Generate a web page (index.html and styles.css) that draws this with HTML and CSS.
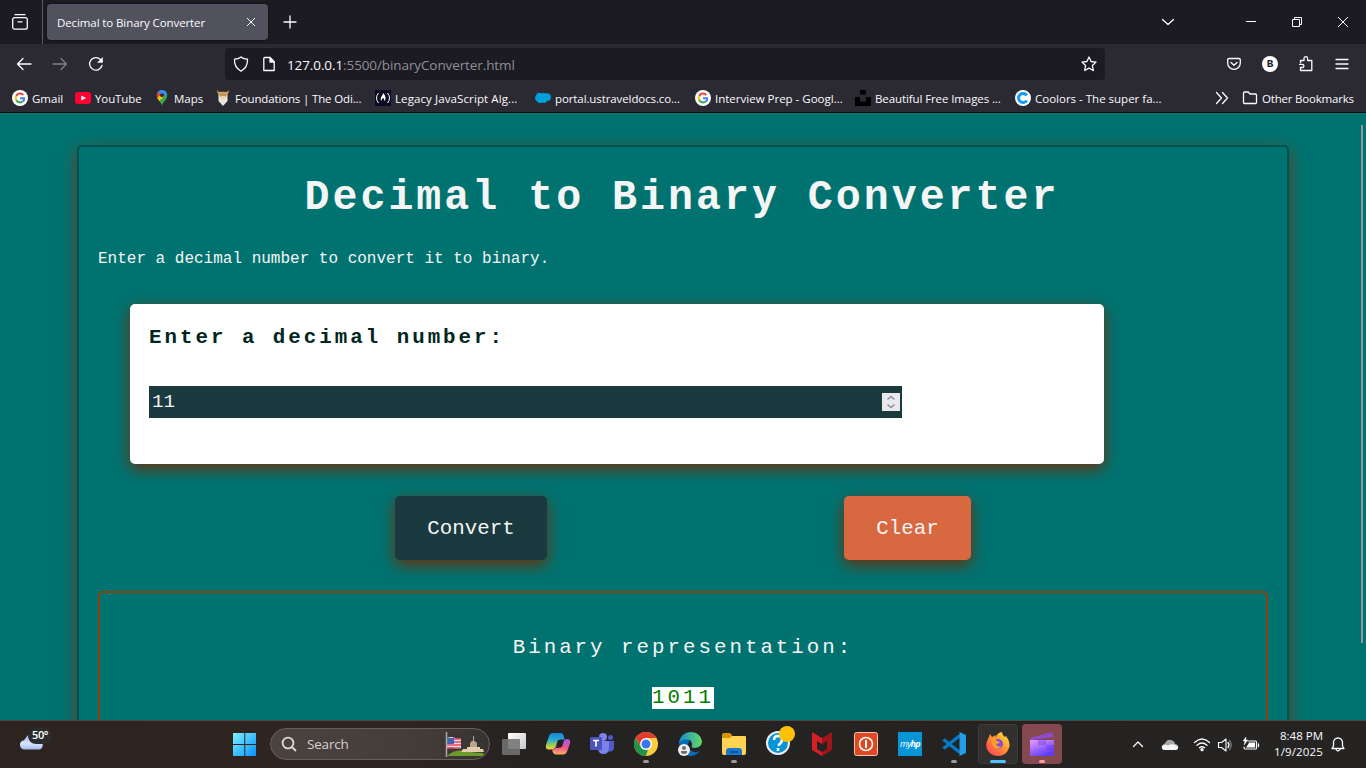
FILE: index.html
```html
<!DOCTYPE html>
<html lang="en">
<head>
<meta charset="utf-8">
<title>Decimal to Binary Converter</title>
<link rel="stylesheet" href="styles.css">
</head>
<body>
<header class="browser">
  <div class="tabbar">
    <div class="recent"><svg width="20" height="20" viewBox="0 0 20 20" class="line"><path d="M5 2.700h10"/><rect x="2.700" y="5.600" width="14.600" height="11.600" rx="2"/><path d="M8 9.800h4"/></svg></div>
    <div class="tab"><span>Decimal to Binary Converter</span><svg width="10" height="10" class="thin"><path d="M1 1l8 8M9 1l-8 8"/></svg></div>
    <svg class="plus line" width="14" height="14"><path d="M7 1v12M1 7h12"/></svg>
    <div class="window">
      <svg width="14" height="14" class="line"><path d="M1.500 4.500L7 9.500l5.500-5"/></svg>
      <svg width="12" height="12" class="thin"><path d="M1 5.500h10"/></svg>
      <svg width="12" height="12" class="thin"><path d="M1.500 3.500h7v7h-7zM3.500 3.500v-2h7v7h-2"/></svg>
      <svg width="12" height="12" class="thin"><path d="M1 1l10 10M11 1L1 11"/></svg>
    </div>
  </div>
  <div class="navbar">
    <svg width="16" height="16" class="line"><path d="M15 8H1.500M7 2.500L1.500 8 7 13.500"/></svg>
    <svg width="16" height="16" class="line dim"><path d="M1 8h13.500M9 2.500L14.500 8 9 13.500"/></svg>
    <svg width="16" height="16" class="line"><path d="M14 9.500A6.300 6.300 0 1 1 12.500 3.500"/><path d="M14.800 1v5.800H9z" fill="#fbfbfe" stroke="none"/></svg>
    <div class="address">
      <svg width="16" height="16" class="line"><path d="M8 .9C6 2.500 4 3 1.500 3.200 1.200 8.500 2.500 12 8 15.200 13.500 12 14.800 8.500 14.500 3.200 12 3 10 2.500 8 .9z"/></svg>
      <svg width="16" height="16" class="line"><path d="M3.800 1.500H9L13.200 6v8.500h-10.400V2.500q0-1 1-1z"/><path d="M9 1.500V6h4.200z" fill="#fbfbfe"/></svg>
      <span class="url"><b>127.0.0.1</b>:5500/binaryConverter.html</span>
      <svg width="16" height="16" class="line star"><path d="M8 1l2.100 4.500 4.900.6-3.600 3.400.9 5L8 12.100l-4.300 2.400.9-5L1 6.100l4.900-.6z"/></svg>
    </div>
    <div class="tools">
      <svg width="16" height="16" class="line"><path d="M3 2.500h10q1.300 0 1.300 1.300v3.200a6.300 6.300 0 0 1-12.600 0V3.800Q1.700 2.500 3 2.500zM5 6.500l3 2.800 3-2.800"/></svg>
      <span class="avatar">B</span>
      <svg width="16" height="16" class="line"><path d="M2.500 6.500V4.500H6V2.500a1.800 1.800 0 0 1 3.600 0v2h4.200v10H2.500V11.500h1.800a1.500 1.500 0 0 0 0-3.200H1.500"/></svg>
      <svg width="16" height="16" class="line"><path d="M2 3.500h12M2 8h12M2 12.500h12"/></svg>
    </div>
  </div>
  <nav class="bookmarks">
    <a class="bm w1"><svg width="16" height="16" viewBox="0 0 16 16"><circle cx="8" cy="8" r="8" fill="#fff"/><g fill="none" stroke-width="2"><path d="M11.300 5A4.300 4.300 0 0 0 4.200 6" stroke="#ea4335"/><path d="M4.200 6a4.300 4.300 0 0 0 0 4" stroke="#fbbc05"/><path d="M4.200 10a4.300 4.300 0 0 0 6.500 1.500" stroke="#34a853"/><path d="M10.700 11.500A4 4 0 0 0 12.200 8.200H8" stroke="#4285f4"/></g></svg><span>Gmail</span></a>
    <a class="bm w2"><svg width="16" height="16"><rect y="2" width="16" height="12" rx="3" fill="#ff0033"/><path d="M6.300 5.500v5L11 8z" fill="#fff"/></svg><span>YouTube</span></a>
    <a class="bm w3"><svg width="16" height="16"><path d="M8 16C7.500 12 2.700 9.500 2.700 5.300A5.300 5.300 0 0 1 13.300 5.300C13.300 9.500 8.500 12 8 16z" fill="#34a853"/><path d="M3.900 2A5.300 5.300 0 0 1 13 3.800L8 8z" fill="#4285f4"/><path d="M3.900 2L7 5 3.400 8Q2 5 3.900 2z" fill="#ea4335"/><path d="M3.300 8L8 3.500l2 3-4.800 4.500z" fill="#fbbc04"/><circle cx="8" cy="5.200" r="1.900" fill="#2b2a33"/></svg><span>Maps</span></a>
    <a class="bm w4"><svg width="16" height="16"><path d="M2 0Q2 4 5 4.500L11 4.500Q14 4 14 0L12 2Q8 1.500 4 2z" fill="#d3a15b"/><path d="M3.500 4q4.500-2.500 9 0v7l-4.500 5-4.500-5z" fill="#e8e5de"/><path d="M4 4q4-3 8 0l-1 3H5z" fill="#c69354"/><path d="M5.500 6h5v2l-2.500 1.500L5.500 8z" fill="#f2cfaa"/></svg><span>Foundations | The Odi...</span></a>
    <a class="bm w5"><svg width="16" height="16"><path d="M0 0h16v16H0z" fill="#0a0a23"/><path d="M3.500 3Q-.5 8 3.500 13M12.500 3q4 5 0 10" fill="none" stroke="#fff"/><path d="M8 3q3 3 2.500 5.500T9.500 11Q9 8 8 8T6.500 11Q5 9 6 7 8 5 8 3z" fill="#fff"/></svg><span>Legacy JavaScript Alg...</span></a>
    <a class="bm w6"><svg width="16" height="16"><path d="M2 11.500Q-1 9 .5 6.500T2 3.500Q4 2 6.500 3.500q2-1.500 4 0 5-1 5.500 3.500 0 4-4 4-1.500 3-4.500 1.500Q4 14.500 2 11.500z" fill="#009edb"/></svg><span>portal.ustraveldocs.co...</span></a>
    <a class="bm w7"><svg width="16" height="16" viewBox="0 0 16 16"><circle cx="8" cy="8" r="8" fill="#fff"/><g fill="none" stroke-width="2"><path d="M11.300 5A4.300 4.300 0 0 0 4.200 6" stroke="#ea4335"/><path d="M4.200 6a4.300 4.300 0 0 0 0 4" stroke="#fbbc05"/><path d="M4.200 10a4.300 4.300 0 0 0 6.500 1.500" stroke="#34a853"/><path d="M10.700 11.500A4 4 0 0 0 12.200 8.200H8" stroke="#4285f4"/></g></svg><span>Interview Prep - Googl...</span></a>
    <a class="bm w8"><svg width="16" height="16"><path d="M5 0h6v4.500H5zM0 7h5v4.500h6V7h5v9H0z"/></svg><span>Beautiful Free Images ...</span></a>
    <a class="bm w9"><svg width="16" height="16"><circle cx="8" cy="8" r="8" fill="#fff"/><path d="M11.800 5.500a4.500 4.500 0 1 0 0 5" fill="none" stroke="#149bff" stroke-width="3"/></svg><span>Coolors - The super fa...</span></a>
    <a class="bm other"><svg class="more line" width="14" height="16"><path d="M1.500 2.500L6.500 8l-5 5.500M7.500 2.500L12.500 8l-5 5.500"/></svg><svg width="16" height="16" class="line"><path d="M2.500 2h3.800l1.700 2h5.500q1 0 1 1v7.500q0 1-1 1h-11q-1 0-1-1V3q0-1 1-1z"/></svg><span>Other Bookmarks</span></a>
  </nav>
</header>
<div class="viewport">
  <main class="container">
    <h1>Decimal to Binary Converter</h1>
    <p class="intro">Enter a decimal number to convert it to binary.</p>
    <section class="card">
      <label>Enter a decimal number:</label>
      <div class="field"><span>11</span><svg class="spin" width="18" height="18"><path d="M5.500 6.500L9 3.500l3.500 3M5.500 11.500l3.500 3 3.500-3"/></svg></div>
    </section>
    <div class="buttons"><button class="convert">Convert</button><button class="clear">Clear</button></div>
    <section class="result"><p>Binary representation:</p><output>1011</output></section>
  </main>
  <i class="scroll"></i>
</div>
<footer class="taskbar">
  <div class="weather"><svg width="26" height="20"><defs><linearGradient id="cl" x2="0" y2="1"><stop stop-color="#a2bbed"/><stop offset=".6" stop-color="#d8e4fb"/><stop offset="1" stop-color="#9fb9e8"/></linearGradient></defs><path d="M5 17.500a4.700 4.700 0 0 1 0-9.300L9 3q4-1 6 4l6 1.500a5 5 0 0 1 0 9z" fill="url(#cl)"/></svg><span>50°</span></div>
  <svg class="start" width="24" height="24"><defs><linearGradient id="w" x2="1" y2="1"><stop stop-color="#7df0ff"/><stop offset="1" stop-color="#0791ff"/></linearGradient></defs><path d="M0 0h11.300v11H0zM12.300 0H23v11H12.300zM0 12h11.300v11H0zM12.300 12H23v11H12.300z" fill="url(#w)"/></svg>
  <div class="search"><svg width="16" height="16" fill="none" stroke="#dedbd9" stroke-width="1.800"><circle cx="7" cy="7" r="5.400"/><path d="M11 11l4 4"/></svg><span>Search</span>
    <svg width="40" height="26"><path d="M2 25Q10 18 20 20T38 22q2 2-1 3z" fill="#6b9d28"/><path d="M18 18h20l1 3H16zM22 16h13v3H22z" fill="#e3ceb2"/><path d="M25 16v-4q3-5 7 0v4zM28 5h1v5h-1z" fill="#b7a58f"/><path d="M2 7q4-2 8 0t6 0v10q-4 1-7 0t-7 0z" fill="#e8dbe8"/><path d="M2 8h14M2 11h14M2 14h14M2 17h13" stroke="#df4560" stroke-width="1.500"/><path d="M2 7h7v6H2z" fill="#4660ae"/><path d="M1.500 1v25" stroke="#aaa" stroke-width="1.500"/></svg></div>
  <div class="apps">
    <span class="app"><svg width="24" height="24"><defs><linearGradient id="tv" x2="1" y2="1"><stop stop-color="#fff"/><stop offset="1" stop-color="#c9c9c9"/></linearGradient></defs><rect x="6" y="1" width="18" height="16" rx="1" fill="url(#tv)"/><rect y="7" width="18" height="16" rx="1" fill="#737373" opacity=".88"/></svg></span>
    <span class="app"><svg width="26" height="24"><defs><linearGradient id="ca" x2="0" y2="1"><stop stop-color="#1686dd"/><stop offset=".4" stop-color="#28a8d8"/><stop offset=".65" stop-color="#7bc96b"/><stop offset="1" stop-color="#ffd225"/></linearGradient><linearGradient id="cb" x2="0" y2="1"><stop stop-color="#a353f4"/><stop offset=".55" stop-color="#ef568b"/><stop offset="1" stop-color="#ffb15b"/></linearGradient></defs><path d="M8 1h8q2 0 3 4l.7 2.500h-4q-2.700-.5-3.700 3l-1.500 4.500Q9 17.500 6 17.500H4q-4 0-3-4.500L4 4q1-3 4-3z" fill="url(#ca)"/><path d="M18 22.500h-7q-3 0-4-5 3 0 4-3l2-6q-1 4 0 7h2.500q1.500 0 2-2l1.500-5q1-1.500 3-1.500 4 0 3 4.500l-3 8q-1 3-4 3z" fill="url(#cb)"/><path d="M13 8l-2 8h2.500l2-8z" fill="#252423"/></svg></span>
    <span class="app"><svg width="24" height="24"><circle cx="13" cy="5" r="4" fill="#7b83eb"/><circle cx="20.500" cy="5.500" r="2.500" fill="#5059c9"/><path d="M17 9h7v8q-2 4-7 2z" fill="#5059c9"/><path d="M8 9h11v7q0 6-6 6-4 0-5-5z" fill="#7b83eb"/><rect y="5" width="12" height="13" rx="1" fill="#4b53bc"/><path d="M3 8.500h6M6 8.500v6" stroke="#fff" stroke-width="1.700"/></svg></span>
    <span class="app run"><svg width="24" height="24"><circle cx="12" cy="12" r="12" fill="#ffcd40"/><path d="M1.600 6A12 12 0 0 1 22.400 6H12L7 15z" fill="#e33b2e"/><path d="M1.600 6l5.200 9Q9 18 14 17.500L12 24A12 12 0 0 1 1.600 6z" fill="#229447"/><circle cx="12" cy="12" r="5.900" fill="#fff"/><circle cx="12" cy="12" r="4.500" fill="#3679ed"/></svg></span>
    <span class="app"><svg width="25" height="25"><defs><linearGradient id="ed" x2="1"><stop stop-color="#168bd9"/><stop offset="1" stop-color="#67dc60"/></linearGradient></defs><path d="M1 12A12 12 0 0 1 12 0q10 0 12 9 0 7-8 7-3 0-2-3 0-6-6-5-5 0-7 4z" fill="url(#ed)"/><path d="M1 11q6-6 11-2-4 3-1 8 4 5 11 2Q18 24 12 24 2 23 1 11z" fill="#086bb7"/><circle cx="6" cy="18" r="6" fill="#eee"/><circle cx="6" cy="16" r="2" fill="#707070"/><path d="M3 21v-2h6v2q-3 2-6 0z" fill="#707070"/></svg></span>
    <span class="app run"><svg width="24" height="24"><path d="M0 3q0-2 2-2h6l2 2v5H0z" fill="#d99500"/><path d="M0 6h8l2-2h13q1 0 1 1v16q0 2-2 2H2q-2 0-2-2z" fill="#ffd454"/><path d="M4 23v-4q0-3 3-3h10q3 0 3 3v4z" fill="#1778ce"/><path d="M8 20h8" stroke="#0e4a86" stroke-width="1.500"/></svg></span>
    <span class="app help"><svg width="30" height="30"><circle cx="12" cy="17" r="11" fill="#0795d6" stroke="#eee" stroke-width="2"/><path d="M8 14q0-4 4-4t4 3.500-4 6M12 22v3" fill="none" stroke="#fff" stroke-width="2.500"/><circle cx="21" cy="8" r="8" fill="#ffc107"/></svg></span>
    <span class="app"><svg width="20" height="24"><path d="M0 0l10 6v6L5 9v8l5 3v4L0 18z" fill="#d41f24"/><path d="M20 0L10 6v6l5-3v8l-5 3v4l10-6z" fill="#9d171a"/></svg></span>
    <span class="app"><svg width="24" height="24"><rect x=".5" y=".5" width="23" height="23" rx="2" fill="#df4820" stroke="#f4c5b8"/><circle cx="12" cy="12" r="6.500" fill="none" stroke="#fff" stroke-width="1.600"/><path d="M12 8v8" stroke="#fff" stroke-width="2"/></svg></span>
    <span class="app"><span class="myhp">my<b>hp</b></span></span>
    <span class="app run"><svg width="24" height="24"><path d="M1.500 7.500L18 20.500M1.500 16.500L18 3.500" stroke="#087bc3" stroke-width="3.500"/><path d="M17.500 0L24 3v18l-6.500 3z" fill="#249de8"/></svg></span>
    <span class="app active"><svg width="24" height="24"><defs><linearGradient id="ff" x1="1" x2="0" y2="1"><stop stop-color="#fff247"/><stop offset=".45" stop-color="#ff932e"/><stop offset="1" stop-color="#ff345e"/></linearGradient></defs><path d="M2 7l2-5 2 3 4-2-1 3q3-6 7-6 0 3 3 5l1-1q5 6 3 12-3 8-11 8T1 17Q-1 12 2 7z" fill="url(#ff)"/><circle cx="12" cy="12" r="5" fill="#7952d8"/><path d="M5 7q4-2 6 2l3 1q-1 2-4 2 2 4 6 2-3 4-7 2-4-2-4-9z" fill="#ff9b32"/></svg></span>
    <span class="app clip"><svg width="24" height="24"><defs><linearGradient id="cc" x2=".6" y2="1"><stop stop-color="#ec9cff"/><stop offset="1" stop-color="#5d3cf5"/></linearGradient></defs><path d="M0 6L20 .5q3 0 3 3v1.500L1 8z" fill="#8d4bd2"/><path d="M0 8h24v14q0 2-2 2H0z" fill="url(#cc)"/><path d="M8 8h8v5H8zM16 13h8v5h-8z" fill="#6434e4" opacity=".35"/></svg></span>
  </div>
  <div class="tray">
    <svg width="12" height="12" class="line"><path d="M1.500 7.500L6 3l4.500 4.500"/></svg>
    <svg class="cloud" width="18" height="14"><path d="M1 10Q1 6 4 5.500 6 1 10 2q4 1 4 4 3 0 3 3z" fill="#a8a8a8"/><path d="M3 12q-3-1-2-4 3-2 6-.500 5-2.500 8 0 3 .5 2 3-1 1.500-2 1.500z" fill="#f5f5f5"/></svg>
    <svg class="wifi line" width="18" height="16"><path d="M1.500 5.500q7.500-7 15 0M4 8.200q5-4.500 10 0M6.500 10.800q2.500-2.200 5 0"/><circle cx="9" cy="12.700" r="1" fill="#fff"/></svg>
    <svg class="vol line" width="17" height="16"><path d="M1.500 5.500h3L9 2v12l-4.500-3.500h-3z" stroke-width="1.100"/><path d="M11 5.500q2 2.500 0 5" /><path d="M12.500 3.500q3.500 4.500 0 9" stroke="#777"/></svg>
    <svg class="bat line" width="18" height="16"><path d="M6.500 4h7q1 0 1 1v6q0 1-1 1h-10q-1.500 0-1.500-1.500V10" stroke-width="1.200"/><path d="M7 5.500h6v5H4l2-3z" fill="#fff" stroke="none"/><path d="M16.500 7v2.500"/><path d="M4 0L1 4h2L2 8l4-5H4z" fill="#fff" stroke-width=".4"/></svg>
    <div class="clock"><span>8:48 PM</span><span class="date">1/9/2025</span></div>
    <svg width="14" height="16" class="line"><path d="M1 11.500L2.500 9V5.500a4.500 4.500 0 0 1 9 0V9l1.500 2.500zM5 12.500q2 3 4 0"/></svg>
  </div>
</footer>
</body>
</html>
```
FILE: styles.css
```css
* { box-sizing: border-box; }
body { margin: 0; width: 1366px; height: 768px; overflow: hidden; display: flex; flex-direction: column; font-family: "Open Sans", sans-serif; color: #fbfbfe; background: #007371; }
svg { display: block; flex: none; }
.line { fill: none; stroke: #fbfbfe; stroke-width: 1.3; stroke-linecap: round; stroke-linejoin: round; }
.thin { fill: none; stroke: #fbfbfe; stroke-width: 1; }
.dim { opacity: .4; }
.browser { height: 113px; background: #2b2a33; border-bottom: 1px solid #0c0c0d; flex: none; font-size: 11.500px; letter-spacing: -.1px; }
.tabbar { height: 44px; background: #1c1b22; display: flex; align-items: center; }
.recent { width: 43px; height: 44px; border-right: 1px solid #5b5a62; padding: 12px 0 0 10px; }
.tab { margin-left: 4px; width: 221px; height: 36px; border-radius: 4px; background: #52525e; display: flex; align-items: center; justify-content: space-between; padding: 0 12px 0 10px; box-shadow: 0 0 3px #0008; }
.plus { margin-left: 15px; }
.window { margin-left: auto; display: flex; align-items: center; padding-right: 17px; }
.window svg { margin-left: 34px; }
.window svg:nth-child(2) { margin-left: 70px; }
.navbar { height: 40px; display: flex; align-items: center; padding-left: 16px; gap: 20px; }
.address { width: 880px; height: 32px; margin-left: 101px; background: #1c1b22; border-radius: 4px; display: flex; align-items: center; padding: 0 8px; gap: 12px; }
.url { color: #8f8f97; font-size: 13.500px; letter-spacing: -.1px; margin-left: -2px; padding-top: 1px; }
.url b { font-weight: 400; color: #fbfbfe; }
.star { margin-left: auto; }
.tools { display: flex; gap: 20px; margin-left: 101px; }
.avatar { width: 16px; height: 16px; border-radius: 50%; background: #fff; color: #222; font: bold 11px/16px "Liberation Mono", monospace; text-align: center; }
.bookmarks { height: 28px; display: flex; align-items: center; padding-left: 12px; }
.bm { display: flex; align-items: center; gap: 4px; white-space: nowrap; flex: none; }
.w1 { width: 63px; letter-spacing: 0; }
.w2 { width: 79px; }
.w3 { width: 61px; letter-spacing: 0; }
.w4 { width: 160px; letter-spacing: -.15px; }
.w5 { width: 160px; letter-spacing: .1px; }
.w6 { width: 160px; }
.w7 { width: 160px; letter-spacing: 0; }
.w8 { width: 160px; }
.w9 { width: 200px; letter-spacing: 0; }
.other { letter-spacing: -.2px; }
.more { margin-right: 9px; }
.viewport { height: 607px; overflow: hidden; padding: 32px 77px 0; background: #007371; position: relative; font-family: "Liberation Mono", "Courier New", monospace; flex: none; }
.scroll { position: absolute; right: 3px; top: 12px; width: 2px; height: 518px; background: #8f9494; }
.container { width: 1212px; height: 680px; border: 2px solid #005351; border-radius: 5px; padding: 0 19px; box-shadow: 0 5px 15px #6b3a1a; display: flex; flex-direction: column; }
h1 { margin: 27px 0 0; font-size: 41.600px; line-height: 48px; letter-spacing: 3px; text-align: center; color: #f5f5f5; transform: translateX(-1px); }
.intro { margin: 27px 0 0; font-size: 16px; line-height: 20px; color: #f5f5f5; }
.card { margin: 35px 0 0 32px; width: 974px; height: 160px; border-radius: 5px; padding: 22px 19px; background: #fff; box-shadow: 0 5px 15px #6a300a; flex: none; }
label { display: block; color: #012622; font-size: 20.800px; line-height: 24px; font-weight: 700; letter-spacing: 3px; }
.field { width: 753px; height: 32px; margin-top: 36px; background: #1a3a3f; color: #f5f5f5; display: flex; justify-content: space-between; align-items: center; padding: 0 2px 0 3px; font-size: 19.200px; }
.spin { background: #e9e9ed; fill: none; stroke: #8f8f9d; stroke-width: 1.500; }
.buttons { display: flex; justify-content: space-between; margin: 32px 297px 32px 297px; flex: none; }
button { height: 64px; border: 0; border-radius: 5px; padding: 0; color: #f5f5f5; font: 20.800px "Liberation Mono", monospace; box-shadow: 0 5px 15px #6a300a; }
.convert { width: 152px; background: #1a3a3f; }
.clear { width: 127px; background: #d86840; }
.result { flex: 1; margin-top: -1px; width: 1170px; border: 2px solid #8b4110; border-radius: 5px; display: flex; flex-direction: column; align-items: center; font-size: 20.800px; letter-spacing: 3px; padding-top: 43px; line-height: 24px; color: #f5f5f5; }
.result p { margin: 0; }
output { margin-top: 27px; background: #fff; color: #008000; line-height: 22px; }
.taskbar { height: 48px; background: linear-gradient(90deg, #2d241f 0, #302420 28%, #242321 40%, #252423 100%); border-top: 1px solid #4a4947; display: flex; position: relative; flex: none; }
.weather { display: flex; width: 232px; padding: 10px 0 0 19px; }
.weather svg { margin-top: 1px; }
.weather span { font-size: 11px; font-weight: 600; line-height: 14px; height: 16px; margin-left: -17px; padding: 0 4px; border-radius: 8px; background: #2a2d2d; color: #fff; letter-spacing: -.4px; margin-top: -3px; z-index: 1; }
.start { margin: 12px 13px 0 1px; }
.search { width: 220px; height: 32px; margin-top: 7px; border: 1px solid #65605d; border-radius: 16px; background: linear-gradient(90deg, #4b4340, #443c39 70%, #353330); display: flex; align-items: center; padding: 0 4px 0 10px; font-size: 13.500px; color: #d4d0cd; letter-spacing: -.2px; }
.search span { margin-left: 10px; }
.search svg:last-child { margin-left: auto; }
.apps { display: flex; margin-left: 4px; padding-top: 3px; gap: 4px; }
.app { width: 40px; height: 40px; display: flex; align-items: center; justify-content: center; border-radius: 4px; position: relative; }
.run::after, .active::after, .clip::after { content: ""; position: absolute; bottom: 1px; left: 17px; width: 6px; height: 3px; border-radius: 2px; background: #999; }
.active { background: #31302f; box-shadow: inset 0 0 0 1px #3b3a39; }
.active::after { left: 12px; width: 16px; background: #4cc2ff; }
.clip { background: #844a50; }
.clip::after { background: #ff98a3; }
.help svg { margin: -6px -5px 0 0; }
.myhp { width: 24px; height: 24px; background: #0795d6; color: #fff; font: italic 9px/23px "Open Sans", sans-serif; text-align: center; letter-spacing: -.7px; }
.tray { margin-left: auto; display: flex; align-items: center; padding-right: 21px; }
.cloud { margin-left: 17px; } .wifi { margin-left: 14px; } .vol { margin-left: 6px; } .bat { margin-left: 8px; }
.clock { width: 63px; margin: 0 8px 0 0; display: flex; flex-direction: column; text-align: right; font-size: 11.500px; line-height: 16px; letter-spacing: 0; padding-bottom: 1px; }
.date { letter-spacing: .15px; }
```
